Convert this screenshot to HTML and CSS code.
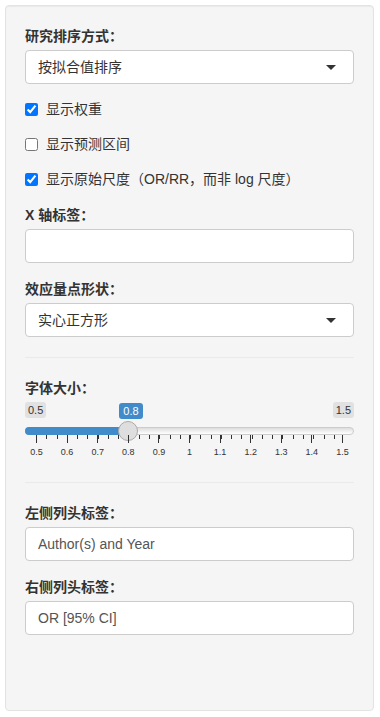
FILE: index.html
```html
<!DOCTYPE html>
<html>
<head>
    <title>森林图设置</title>
    <link rel="stylesheet" href="styles.css">
</head>
<body>
    <!-- Sidebar panel with plot options -->
    <div class="well">
        <div class="form-group">
            <label class="control-label">研究排序方式：</label>
            <div class="select-box">
                <span>按拟合值排序</span>
                <span class="caret"></span>
            </div>
        </div>

        <div class="checkbox">
            <label><input type="checkbox" checked> <span>显示权重</span></label>
        </div>
        <div class="checkbox">
            <label><input type="checkbox"> <span>显示预测区间</span></label>
        </div>
        <div class="checkbox">
            <label><input type="checkbox" checked> <span>显示原始尺度（OR/RR，而非 log 尺度）</span></label>
        </div>

        <div class="form-group">
            <label class="control-label">X 轴标签：</label>
            <input type="text" class="form-control" value="">
        </div>

        <div class="form-group">
            <label class="control-label">效应量点形状：</label>
            <div class="select-box">
                <span>实心正方形</span>
                <span class="caret"></span>
            </div>
        </div>

        <hr class="divider">

        <!-- Font size slider -->
        <div class="form-group slider-group">
            <label class="control-label">字体大小：</label>
            <div class="slider">
                <div class="slider-labels">
                    <span class="bound">0.5</span>
                    <span class="current">0.8</span>
                    <span class="bound">1.5</span>
                </div>
                <div class="track">
                    <div class="bar"></div>
                    <div class="handle"></div>
                </div>
                <div class="grid">
                    <div class="tick"><span>0.5</span></div>
                    <div class="tick"><span>0.6</span></div>
                    <div class="tick"><span>0.7</span></div>
                    <div class="tick"><span>0.8</span></div>
                    <div class="tick"><span>0.9</span></div>
                    <div class="tick"><span>1</span></div>
                    <div class="tick"><span>1.1</span></div>
                    <div class="tick"><span>1.2</span></div>
                    <div class="tick"><span>1.3</span></div>
                    <div class="tick"><span>1.4</span></div>
                    <div class="tick"><span>1.5</span></div>
                </div>
            </div>
        </div>

        <hr class="divider">

        <div class="form-group">
            <label class="control-label">左侧列头标签：</label>
            <input type="text" class="form-control" value="Author(s) and Year">
        </div>

        <div class="form-group">
            <label class="control-label">右侧列头标签：</label>
            <input type="text" class="form-control" value="OR [95% CI]">
        </div>
    </div>
</body>
</html>
```

FILE: styles.css
```css
/* Page base */
body {
    margin: 5px 6px 6px 5px;
    font-family: "Liberation Sans", "Noto Sans CJK SC", sans-serif;
    font-size: 14px;
    line-height: 20px;
    color: #333;
    background: #fff;
}

/* Sidebar well */
.well {
    box-sizing: border-box;
    height: 706px;
    padding: 19px;
    background-color: #f5f5f5;
    border: 1px solid #e3e3e3;
    border-radius: 4px;
    box-shadow: inset 0 1px 1px rgba(0, 0, 0, 0.05);
}

.form-group {
    margin-bottom: 15px;
}

.control-label {
    display: block;
    font-weight: bold;
    margin-bottom: 5px;
    padding-top: 1px;
    height: 19px;
}

/* Select boxes */
.select-box {
    box-sizing: border-box;
    height: 34px;
    padding: 0 17px 0 12px;
    display: flex;
    align-items: center;
    justify-content: space-between;
    background: #fff;
    border: 1px solid #ccc;
    border-radius: 4px;
    color: #333;
}

.caret {
    width: 0;
    height: 0;
    border-left: 5px solid transparent;
    border-right: 5px solid transparent;
    border-top: 5px solid #333;
}

/* Checkboxes */
.checkbox {
    margin-bottom: 15px;
}

.checkbox label {
    display: flex;
    align-items: center;
    gap: 8px;
}

.checkbox input {
    width: 13px;
    height: 13px;
    margin: 0;
    accent-color: #0075ff;
}

/* Text inputs */
.form-control {
    box-sizing: border-box;
    display: block;
    width: 100%;
    height: 34px;
    padding: 6px 12px;
    font-family: inherit;
    font-size: 14px;
    color: #555;
    background: #fff;
    border: 1px solid #ccc;
    border-radius: 4px;
}

/* Dividers */
.divider {
    border: 0;
    border-top: 1px solid #eaeaea;
    margin: 20px 0 19px;
}

/* Slider */
.slider {
    height: 60px;
}

.slider-labels {
    display: flex;
    justify-content: space-between;
    align-items: center;
    height: 16px;
}

.slider-labels span {
    font-size: 11px;
    line-height: 14px;
    padding: 1px 3px;
    border-radius: 3px;
}

.slider-labels .bound {
    background: #e1e1e1;
    color: #333;
}

.slider-labels .current {
    background: #428bca;
    color: #fff;
    margin-left: 73px;
    margin-right: auto;
    margin-top: 1px;
    padding: 1px 4px;
}

.track {
    position: relative;
    margin-top: 9px;
    height: 8px;
    border: 1px solid #ccc;
    border-radius: 8px;
    background: linear-gradient(#ddd, #fff);
    box-sizing: border-box;
}

.bar {
    width: 104px;
    height: 8px;
    margin: -1px 0 0 -1px;
    background: #428bca;
    border-radius: 8px 0 0 8px;
}

.handle {
    position: absolute;
    left: 92px;
    top: -7px;
    width: 20px;
    height: 20px;
    box-sizing: border-box;
    border-radius: 50%;
    background: #dedede;
    border: 1px solid #ababab;
}

/* Tick grid under the slider */
.grid {
    display: flex;
    justify-content: space-between;
    margin: 0 11px;
    height: 20px;
    background: repeating-linear-gradient(to right, #333 0, #333 1px, transparent 1px, transparent 10.27px) no-repeat;
    background-size: 100% 4px;
}

.tick {
    width: 1px;
    height: 8px;
    background: #333;
    position: relative;
    display: flex;
    justify-content: center;
}

.tick span {
    position: absolute;
    top: 11px;
    font-size: 9px;
    line-height: 12px;
    color: #333;
    white-space: nowrap;
}
```
